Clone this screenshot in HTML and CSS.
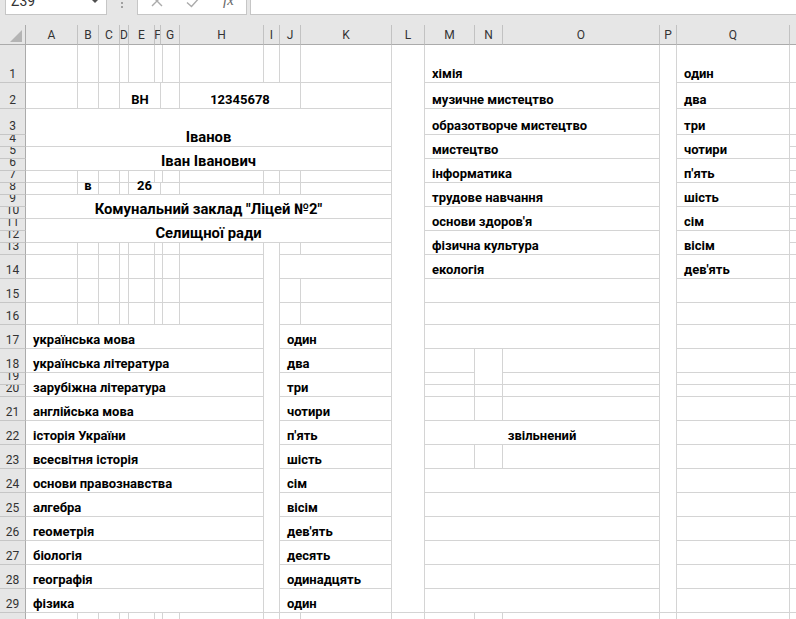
FILE: index.html
```html
<!DOCTYPE html>
<html lang="uk">
<head>
<meta charset="utf-8">
<title>Аркуш</title>
<link rel="stylesheet" href="styles.css">
</head>
<body>
<div class="formula-bar">
  <div class="name-box"><span class="name">Z39</span><span class="drop"></span></div>
  <div class="grip"><i></i><i></i></div>
  <div class="fx-box">
    <svg class="ico-x" width="12" height="12" viewBox="0 0 12 12"><path d="M1 1 L11 11 M11 1 L1 11" /></svg>
    <svg class="ico-ok" width="16" height="12" viewBox="0 0 16 12"><path d="M1 6.5 L5.5 10.5 L14.5 0.5" /></svg>
    <span class="fx">fx</span>
  </div>
  <div class="input-box"></div>
</div>

<div class="sheet">
  <!-- column headers -->
  <div class="corner"><svg width="14" height="14" viewBox="0 0 14 14"><path d="M1 13 L13 13 L13 1 Z" /></svg></div>
  <div class="ch">A</div><div class="ch">B</div><div class="ch">C</div><div class="ch">D</div><div class="ch">E</div><div class="ch">F</div><div class="ch">G</div><div class="ch">H</div><div class="ch">I</div><div class="ch">J</div><div class="ch">K</div><div class="ch">L</div><div class="ch">M</div><div class="ch">N</div><div class="ch">O</div><div class="ch">P</div><div class="ch">Q</div><div class="ch">R</div>

  <!-- 1 -->
  <div class="rh">1</div>
  <div class="c"></div><div class="c"></div><div class="c"></div><div class="c"></div><div class="c"></div><div class="c"></div><div class="c"></div><div class="c"></div><div class="c"></div><div class="c"></div><div class="c"></div>
  <div class="c y29"></div>
  <div class="c x3">хімія</div>
  <div class="c y29"></div>
  <div class="c">один</div>
  <div class="c"></div>

  <!-- 2 -->
  <div class="rh">2</div>
  <div class="c"></div><div class="c"></div><div class="c"></div>
  <div class="c x3 m">ВН</div>
  <div class="c"></div>
  <div class="c x3 m">12345678</div>
  <div class="c"></div>
  <div class="c x3">музичне мистецтво</div>
  <div class="c">два</div>
  <div class="c"></div>

  <!-- 3 -->
  <div class="rh">3</div>
  <div class="c x11 y2 m big">Іванов</div>
  <div class="c x3">образотворче мистецтво</div>
  <div class="c">три</div>
  <div class="c"></div>

  <!-- 4 -->
  <div class="rh">4</div>
  <div class="c x3 y2">мистецтво</div>
  <div class="c y2">чотири</div>
  <div class="c"></div>

  <!-- 5 -->
  <div class="rh">5</div>
  <div class="c x11 y2 m big">Іван Іванович</div>
  <div class="c"></div>

  <!-- 6 -->
  <div class="rh">6</div>
  <div class="c x3 y2">інформатика</div>
  <div class="c y2">п'ять</div>
  <div class="c"></div>

  <!-- 7 -->
  <div class="rh">7</div>
  <div class="c"></div><div class="c"></div><div class="c"></div><div class="c"></div><div class="c"></div><div class="c"></div><div class="c"></div><div class="c"></div><div class="c"></div><div class="c"></div><div class="c"></div>
  <div class="c"></div>

  <!-- 8 -->
  <div class="rh">8</div>
  <div class="c"></div>
  <div class="c m ov">в</div>
  <div class="c"></div><div class="c"></div>
  <div class="c x2 m ov">26</div>
  <div class="c"></div><div class="c"></div><div class="c"></div><div class="c"></div><div class="c"></div>
  <div class="c x3 y2">трудове навчання</div>
  <div class="c y2">шість</div>
  <div class="c"></div>

  <!-- 9 -->
  <div class="rh">9</div>
  <div class="c x11 y2 m big">Комунальний заклад "Ліцей №2"</div>
  <div class="c"></div>

  <!-- 10 -->
  <div class="rh">10</div>
  <div class="c x3 y2">основи здоров'я</div>
  <div class="c y2">сім</div>
  <div class="c"></div>

  <!-- 11 -->
  <div class="rh">11</div>
  <div class="c x11 y2 m big">Селищної ради</div>
  <div class="c"></div>

  <!-- 12 -->
  <div class="rh">12</div>
  <div class="c x3 y2">фізична культура</div>
  <div class="c y2">вісім</div>
  <div class="c"></div>

  <!-- 13 -->
  <div class="rh">13</div>
  <div class="c"></div><div class="c"></div><div class="c"></div><div class="c"></div><div class="c"></div><div class="c"></div><div class="c"></div><div class="c"></div>
  <div class="c y17"></div>
  <div class="c"></div><div class="c"></div>
  <div class="c"></div>

  <!-- 14 -->
  <div class="rh">14</div>
  <div class="c"></div><div class="c"></div><div class="c"></div><div class="c"></div><div class="c"></div><div class="c"></div><div class="c"></div><div class="c"></div>
  <div class="c x2"></div>
  <div class="c x3">екологія</div>
  <div class="c">дев'ять</div>
  <div class="c"></div>

  <!-- 15 -->
  <div class="rh">15</div>
  <div class="c"></div><div class="c"></div><div class="c"></div><div class="c"></div><div class="c"></div><div class="c"></div><div class="c"></div><div class="c"></div>
  <div class="c"></div><div class="c"></div>
  <div class="c x3"></div>
  <div class="c"></div>
  <div class="c"></div>

  <!-- 16 -->
  <div class="rh">16</div>
  <div class="c"></div><div class="c"></div><div class="c"></div><div class="c"></div><div class="c"></div><div class="c"></div><div class="c"></div><div class="c"></div>
  <div class="c"></div><div class="c"></div>
  <div class="c x3"></div>
  <div class="c"></div>
  <div class="c"></div>

  <!-- 17 -->
  <div class="rh">17</div>
  <div class="c x8">українська мова</div>
  <div class="c x2">один</div>
  <div class="c x3"></div>
  <div class="c"></div>
  <div class="c"></div>

  <!-- 18 -->
  <div class="rh">18</div>
  <div class="c x8">українська література</div>
  <div class="c x2">два</div>
  <div class="c"></div><div class="c y2"></div><div class="c"></div>
  <div class="c"></div>
  <div class="c"></div>

  <!-- 19 -->
  <div class="rh">19</div>
  <div class="c x8 y2">зарубіжна література</div>
  <div class="c x2 y2">три</div>
  <div class="c"></div><div class="c"></div>
  <div class="c"></div>
  <div class="c"></div>

  <!-- 20 -->
  <div class="rh">20</div>
  <div class="c"></div><div class="c"></div><div class="c"></div>
  <div class="c"></div>
  <div class="c"></div>

  <!-- 21 -->
  <div class="rh">21</div>
  <div class="c x8">англійська мова</div>
  <div class="c x2">чотири</div>
  <div class="c"></div><div class="c"></div><div class="c"></div>
  <div class="c"></div>
  <div class="c"></div>

  <!-- 22 -->
  <div class="rh">22</div>
  <div class="c x8">історія України</div>
  <div class="c x2">п'ять</div>
  <div class="c x3 m">звільнений</div>
  <div class="c"></div>
  <div class="c"></div>

  <!-- 23 -->
  <div class="rh">23</div>
  <div class="c x8">всесвітня історія</div>
  <div class="c x2">шість</div>
  <div class="c"></div><div class="c"></div><div class="c"></div>
  <div class="c"></div>
  <div class="c"></div>

  <!-- 24 -->
  <div class="rh">24</div>
  <div class="c x8">основи правознавства</div>
  <div class="c x2">сім</div>
  <div class="c x3"></div><div class="c"></div><div class="c"></div>

  <!-- 25 -->
  <div class="rh">25</div>
  <div class="c x8">алгебра</div>
  <div class="c x2">вісім</div>
  <div class="c x3"></div><div class="c"></div><div class="c"></div>

  <!-- 26 -->
  <div class="rh">26</div>
  <div class="c x8">геометрія</div>
  <div class="c x2">дев'ять</div>
  <div class="c x3"></div><div class="c"></div><div class="c"></div>

  <!-- 27 -->
  <div class="rh">27</div>
  <div class="c x8">біологія</div>
  <div class="c x2">десять</div>
  <div class="c x3"></div><div class="c"></div><div class="c"></div>

  <!-- 28 -->
  <div class="rh">28</div>
  <div class="c x8">географія</div>
  <div class="c x2">одинадцять</div>
  <div class="c x3"></div><div class="c"></div><div class="c"></div>

  <!-- 29 -->
  <div class="rh">29</div>
  <div class="c x8">фізика</div>
  <div class="c x2">один</div>
  <div class="c x3"></div><div class="c"></div><div class="c"></div>

  <!-- 30 -->
  <div class="rh">30</div>
  <div class="c"></div><div class="c"></div><div class="c"></div><div class="c"></div><div class="c"></div><div class="c"></div><div class="c"></div><div class="c"></div><div class="c"></div>
  <div class="c"></div><div class="c"></div><div class="c"></div><div class="c"></div><div class="c"></div><div class="c"></div><div class="c"></div><div class="c"></div><div class="c"></div>
</div>
</body>
</html>
```

FILE: styles.css
```css
* {
  box-sizing: border-box;
}

html,
body {
  margin: 0;
  height: 100%;
  overflow: hidden;
  background: #ffffff;
}

body {
  font-family: Roboto, "Noto Sans", sans-serif;
  color: #000;
}

/* ---------- formula bar ---------- */
.formula-bar {
  height: 25px;
  background: #e6e6e6;
  display: flex;
  align-items: flex-start;
}

.name-box {
  position: relative;
  margin-left: 5px;
  width: 102px;
  height: 15px;
  background: #fff;
  border: 1px solid #c6c6c6;
  border-top: 0;
  padding-left: 5px;
}

.name {
  display: block;
  margin-top: -6px;
  font-size: 14px;
  line-height: 14px;
  color: #333;
}

.drop {
  position: absolute;
  right: 7px;
  top: -1px;
  width: 0;
  height: 0;
  border-left: 4px solid transparent;
  border-right: 4px solid transparent;
  border-top: 4px solid #505050;
}

.grip {
  margin-left: 14px;
  width: 2px;
  padding-top: 2px;
  display: flex;
  flex-direction: column;
  gap: 2px;
}

.grip i {
  display: block;
  width: 2px;
  height: 2px;
  background: #a0a0a0;
}

.fx-box {
  position: relative;
  margin-left: 14px;
  width: 110px;
  height: 15px;
  background: #fff;
  border: 1px solid #c6c6c6;
  border-top: 0;
}

.fx-box svg {
  position: absolute;
  fill: none;
  stroke: #ababab;
  stroke-width: 1.4;
}

.ico-x {
  left: 13px;
  top: -5px;
}

.ico-ok {
  left: 48px;
  top: -4px;
}

.fx {
  position: absolute;
  left: 85px;
  top: -7px;
  font-family: "Liberation Serif", serif;
  font-style: italic;
  font-size: 15px;
  line-height: 15px;
  color: #666;
}

.input-box {
  flex: 1;
  margin-left: 3px;
  height: 15px;
  background: #fff;
  border: 1px solid #c6c6c6;
  border-top: 0;
  border-right: 0;
}

/* ---------- sheet grid ---------- */
.sheet {
  display: grid;
  grid-template-columns: 26px 52px 21px 21px 9px 26px 6px 19px 84px 16px 21px 91px 33px 50px 28px 157px 17px 113px 100px;
  grid-template-rows: 20px 38px 26px 26px repeat(10, 12px) 24px 24px 22px 24px 24px 12px 12px repeat(10, 24px);
}

.corner {
  background: #e6e6e6;
  border-right: 1px solid #ababab;
  border-bottom: 1px solid #ababab;
  display: flex;
  align-items: flex-end;
  justify-content: flex-end;
  padding: 0 2px 1px 0;
}

.corner svg {
  fill: #b4b4b4;
}

.ch {
  background: #e6e6e6;
  border-right: 1px solid #c2c2c2;
  border-bottom: 1px solid #ababab;
  display: flex;
  align-items: center;
  justify-content: center;
  font-size: 12px;
  color: #333;
  overflow: hidden;
}

.rh {
  background: #e6e6e6;
  border-right: 1px solid #ababab;
  border-bottom: 1px solid #c6c6c6;
  display: flex;
  align-items: flex-end;
  justify-content: center;
  font-size: 12px;
  line-height: 16px;
  color: #333;
  overflow: hidden;
}

.c {
  border-right: 1px solid #d4d4d4;
  border-bottom: 1px solid #d4d4d4;
  display: flex;
  align-items: flex-end;
  padding-left: 7px;
  font-size: 13px;
  font-weight: 700;
  line-height: 16px;
  white-space: nowrap;
  overflow: hidden;
}

.c.m {
  justify-content: center;
  padding-left: 0;
}

/* text taller than its short row spills over the line above */
.c.ov {
  overflow: visible;
}

/* heading lines of the certificate are one point larger */
.c.big {
  font-size: 14.8px;
  line-height: 17px;
}

/* merged cells */
.x2 { grid-column: span 2; }
.x3 { grid-column: span 3; }
.x8 { grid-column: span 8; }
.x11 { grid-column: span 11; }
.y2 { grid-row: span 2; }
.y17 { grid-row: span 17; }
.y29 { grid-row: span 29; }
```
